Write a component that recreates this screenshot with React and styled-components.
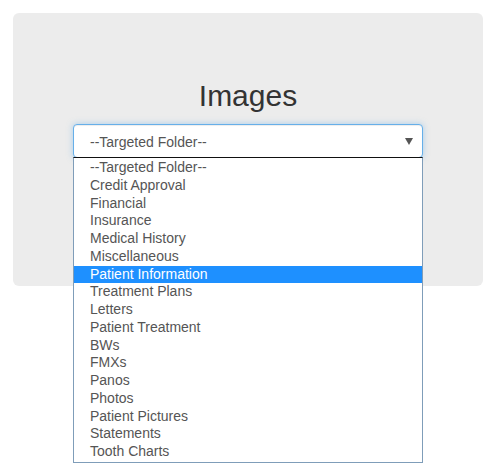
import React from "react";
import styled, { createGlobalStyle } from "styled-components";

const Global = createGlobalStyle`
  html, body { margin: 0; padding: 0; background: #fff; }
  body { font-family: "Liberation Sans", Arial, sans-serif; }
  * { box-sizing: border-box; }
`;

const Page = styled.div`
  padding: 13px 12px 13px 13px;
  width: 495px;
  height: 475px;
`;

const Panel = styled.div`
  width: 470px;
  height: 273px;
  background: #ececec;
  border-radius: 6px;
  padding: 48px 60px 0;
  display: flex;
  flex-direction: column;
  align-items: stretch;
`;

const Title = styled.h1`
  margin: 18px 0 12px;
  font-size: 30px;
  line-height: 33px;
  font-weight: 400;
  color: #333;
  text-align: center;
`;

const SelectWrap = styled.div`
  position: relative;
  width: 350px;
`;

const SelectBox = styled.div`
  height: 34px;
  background: #fff;
  border: 1px solid #66afe9;
  border-radius: 4px;
  box-shadow: inset 0 1px 1px rgba(0, 0, 0, 0.075), 0 0 6px rgba(102, 175, 233, 0.5);
  display: flex;
  align-items: center;
  justify-content: space-between;
  padding: 1px 8px 0 16px;
  font-size: 14px;
  color: #555;
`;

const Caret = styled.svg`
  width: 8px;
  height: 7px;
  margin-right: 1px;
`;

const List = styled.ul`
  position: absolute;
  left: 0;
  right: 0;
  top: calc(100% - 1px);
  margin: 0;
  padding: 1px 0 1px;
  list-style: none;
  background: #fff;
  border: 1px solid #7f9db9;
  border-top-color: #111;
`;

const Option = styled.li`
  height: 17.75px;
  line-height: 17.75px;
  padding-left: 16px;
  font-size: 14px;
  color: ${(p) => (p.$active ? "#fff" : "#555")};
  background: ${(p) => (p.$active ? "#1e90ff" : "transparent")};
  white-space: nowrap;
`;

const options = [
  "--Targeted Folder--",
  "Credit Approval",
  "Financial",
  "Insurance",
  "Medical History",
  "Miscellaneous",
  "Patient Information",
  "Treatment Plans",
  "Letters",
  "Patient Treatment",
  "BWs",
  "FMXs",
  "Panos",
  "Photos",
  "Patient Pictures",
  "Statements",
  "Tooth Charts",
];

export default function App() {
  return (
    <>
      <Global />
      <Page>
        <Panel>
          <Title>Images</Title>
          <SelectWrap>
            <SelectBox>
              <span>--Targeted Folder--</span>
              <Caret viewBox="0 0 8 7">
                <path d="M0 0 L8 0 L4 7 Z" fill="#555" />
              </Caret>
            </SelectBox>
            <List>
              {options.map((o) => (
                <Option key={o} $active={o === "Patient Information"}>
                  {o}
                </Option>
              ))}
            </List>
          </SelectWrap>
        </Panel>
      </Page>
    </>
  );
}
